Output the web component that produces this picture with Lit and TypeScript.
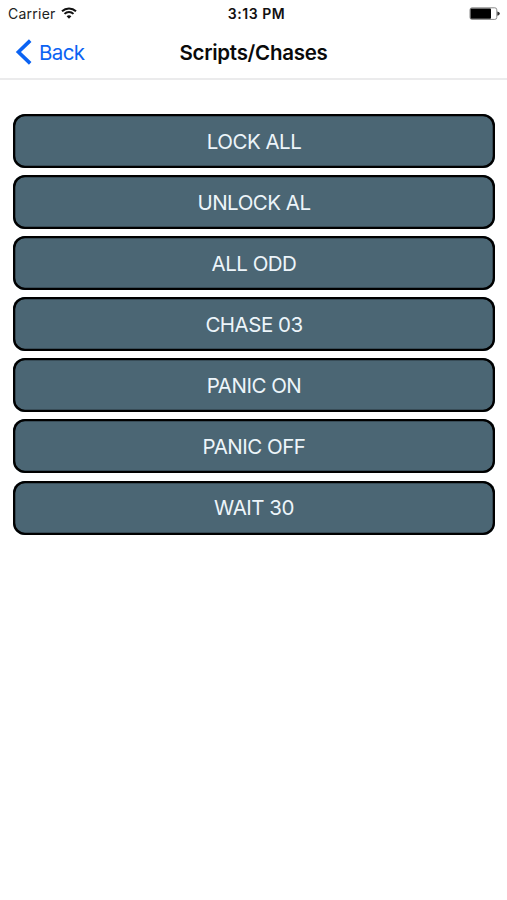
import { LitElement, html, css } from "lit";
import { customElement } from "lit/decorators.js";

const SCRIPTS = ["LOCK ALL", "UNLOCK AL", "ALL ODD", "CHASE 03", "PANIC ON", "PANIC OFF", "WAIT 30"];

@customElement("status-bar")
class StatusBar extends LitElement {
  static styles = css`
    :host {
      display: grid;
      grid-template-columns: 1fr auto 1fr;
      align-items: center;
      height: 27px;
      padding: 0 7px 0 8px;
      font-size: 14px;
      line-height: 27px;
    }
    .carrier { display: flex; align-items: center; gap: 5px; color: #222; letter-spacing: 0.25px; }
    .time { font-weight: 600; font-size: 14px; letter-spacing: 0.55px; color: #111; padding-left: 5px; }
    .battery { justify-self: end; display: block; }
    .wifi { display: block; margin-top: -2px; }
  `;
  render() {
    return html`
      <div class="carrier">
        <span>Carrier</span>
        <svg class="wifi" width="16" height="12" viewBox="0 0 16 12" fill="none" stroke="#111" stroke-width="2">
          <path d="M1 4.2 A10.2 10.2 0 0 1 15 4.2" />
          <path d="M3.5 6.9 A6.5 6.5 0 0 1 12.5 6.9" />
          <path d="M8 11.8 L5.6 9.3 A3.5 3.5 0 0 1 10.4 9.3 Z" fill="#111" stroke="none" />
        </svg>
      </div>
      <div class="time">3:13 PM</div>
      <svg class="battery" width="31" height="13" viewBox="0 0 31 13">
        <rect x="1" y="0.8" width="26.8" height="11.6" rx="2" fill="#fff" stroke="#8a8a8a" />
        <rect x="1.5" y="1.6" width="20.5" height="10.2" rx="0.8" fill="#000" />
        <path d="M28.3 4.4 Q30.8 4.8 30.8 6.6 Q30.8 8.4 28.3 8.8 Z" fill="#333" />
      </svg>
    `;
  }
}

@customElement("nav-bar")
class NavBar extends LitElement {
  static styles = css`
    :host {
      display: grid;
      grid-template-columns: 1fr auto 1fr;
      align-items: center;
      box-sizing: border-box;
      height: 53px;
      padding: 0 15px;
      border-bottom: 2px solid #ebebec;
    }
    .back { display: flex; align-items: center; gap: 6px; color: #0b63f3; font-size: 20.5px; letter-spacing: -0.6px; }
    .title { font-size: 20.5px; font-weight: 600; letter-spacing: -0.28px; color: #0a0a0a; }
    .chevron { display: block; margin-top: -1px; }
  `;
  render() {
    return html`
      <div class="back">
        <svg class="chevron" width="18" height="26" viewBox="0 0 18 26" fill="none" stroke="#0b63f3" stroke-width="3.6">
          <path d="M15.2 1.6 L3.4 13 L15.2 24.4" />
        </svg>
        <span>Back</span>
      </div>
      <div class="title">Scripts/Chases</div>
    `;
  }
}

@customElement("app-root")
class AppRoot extends LitElement {
  static styles = css`
    :host {
      display: block;
      height: 900px;
      background: #fff;
      font-family: Inter, "Liberation Sans", sans-serif;
    }
    .list { display: flex; flex-direction: column; gap: 7.1px; padding: 34px 12px 0 13px; }
    .script {
      box-sizing: border-box;
      height: 54px;
      margin: 0;
      padding: 0;
      border: 0;
      border-radius: 12px;
      box-shadow: inset 0 0 0 2.3px #000;
      background: #4b6674;
      color: #edf5fa;
      font: 400 20.5px Inter, "Liberation Sans", sans-serif;
      letter-spacing: -0.5px;
    }
  `;
  render() {
    return html`
      <status-bar></status-bar>
      <nav-bar></nav-bar>
      <div class="list">${SCRIPTS.map((name) => html`<button class="script">${name}</button>`)}</div>
    `;
  }
}
